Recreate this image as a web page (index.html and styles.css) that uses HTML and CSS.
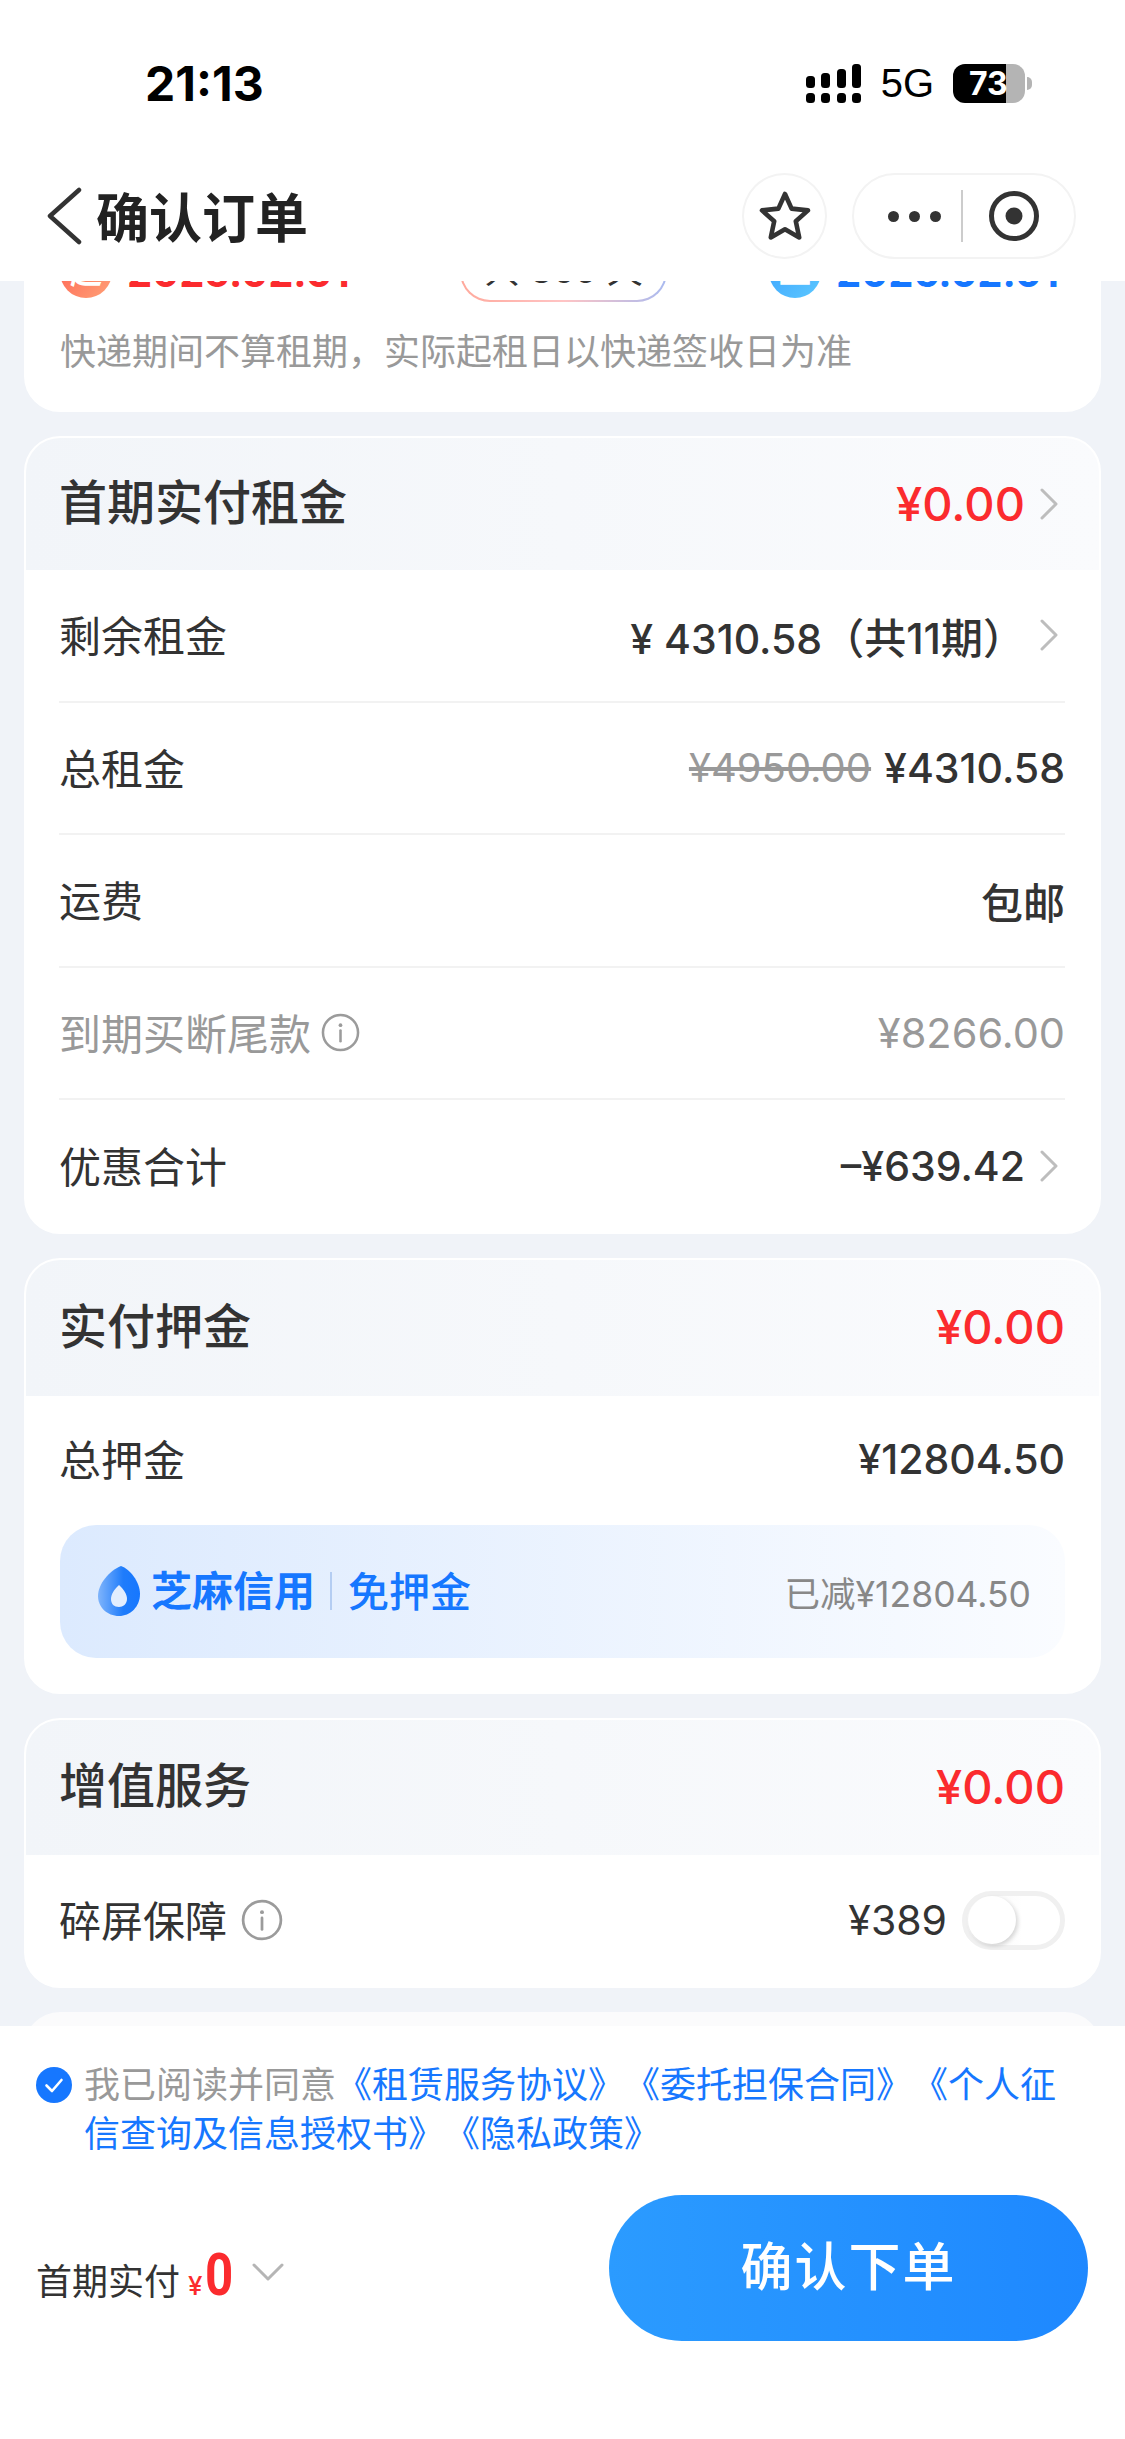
FILE: index.html
```html
<!DOCTYPE html>
<html lang="zh-CN">

<head>
  <meta charset="UTF-8">
  <title>确认订单</title>
  <link rel="stylesheet" href="styles.css">
</head>

<body>
  <!-- 共用图标 -->
  <svg class="defs" width="0" height="0">
    <symbol id="arrow" viewBox="0 0 18 32">
      <path d="M2 2 L16 16 L2 30" fill="none" stroke="#bdbdbd" stroke-width="3" stroke-linecap="round" stroke-linejoin="round" />
    </symbol>
    <symbol id="info" viewBox="0 0 40 40">
      <circle cx="20" cy="20" r="18" fill="none" stroke="#9b9b9b" stroke-width="2.6" />
      <circle cx="20" cy="12.5" r="1.9" fill="#9b9b9b" />
      <path d="M20 18 V29" stroke="#9b9b9b" stroke-width="2.6" stroke-linecap="round" />
    </symbol>
  </svg>

  <div class="app">
    <header class="top">
      <div class="status">
        <span class="time">21:13</span>
        <div class="status-right">
          <svg class="signal" width="56" height="39" viewBox="0 0 56 39">
            <rect x="0" y="29" width="9" height="10" rx="3.5" />
            <rect x="15" y="29" width="9" height="10" rx="3.5" />
            <rect x="31" y="29" width="9" height="10" rx="3.5" />
            <rect x="46" y="29" width="9" height="10" rx="3.5" />
            <rect x="0" y="12" width="9" height="12" rx="3.5" />
            <rect x="15" y="9" width="9" height="15" rx="3.5" />
            <rect x="31" y="5" width="9" height="19" rx="3.5" />
            <rect x="46" y="0" width="9" height="24" rx="3.5" />
          </svg>
          <span class="net">5G</span>
          <div class="battery">73</div>
        </div>
      </div>
      <nav class="nav">
        <div class="nav-left">
          <svg class="back" width="36" height="58" viewBox="0 0 36 58">
            <path d="M33 3 L4 29 L33 55" fill="none" stroke="#333" stroke-width="4.5" stroke-linecap="round" stroke-linejoin="round" />
          </svg>
          <h1 class="nav-title">确认订单</h1>
        </div>
        <div class="nav-right">
          <div class="star-btn">
            <svg width="54" height="50" viewBox="0 0 54 50">
              <path d="M27 3 L33.6 17.6 L50 19.4 L37.8 30.2 L41.2 46.4 L27 38.2 L12.8 46.4 L16.2 30.2 L4 19.4 L20.4 17.6 Z" fill="none" stroke="#333" stroke-width="4.6" stroke-linejoin="round" />
            </svg>
          </div>
          <div class="capsule">
            <div class="dots"><i></i><i></i><i></i></div>
            <div class="capsule-line"></div>
            <svg width="52" height="52" viewBox="0 0 52 52">
              <circle cx="26" cy="26" r="22.5" fill="none" stroke="#333" stroke-width="5" />
              <circle cx="26" cy="26" r="8.5" fill="#333" />
            </svg>
          </div>
        </div>
      </nav>
    </header>

    <main class="scroll">
      <section class="card card-date">
        <div class="date-row">
          <div class="date red"><span class="date-tag">起</span>2025.02.01</div>
          <div class="days">共 365 天</div>
          <div class="date blue"><span class="date-tag">止</span>2026.02.01</div>
        </div>
        <p class="date-note">快递期间不算租期，实际起租日以快递签收日为准</p>
      </section>

      <section class="card">
        <div class="card-head head-rent">
          <h2>首期实付租金</h2>
          <div class="val-wrap"><span class="price">¥0.00</span><svg class="arrow"><use href="#arrow" /></svg></div>
        </div>
        <div class="row">
          <span>剩余租金</span>
          <div class="val-wrap"><span class="val">¥ 4310.58<span class="val-cn">（共11期）</span></span><svg class="arrow"><use href="#arrow" /></svg></div>
        </div>
        <div class="row">
          <span>总租金</span>
          <div class="val-wrap"><s class="old">¥4950.00</s><span class="val">¥4310.58</span></div>
        </div>
        <div class="row">
          <span>运费</span>
          <span class="val val-cn">包邮</span>
        </div>
        <div class="row grey">
          <div class="label-info"><span>到期买断尾款</span><svg class="info"><use href="#info" /></svg></div>
          <span class="val-grey">¥8266.00</span>
        </div>
        <div class="row row-last no-line">
          <span>优惠合计</span>
          <div class="val-wrap"><span class="val">–¥639.42</span><svg class="arrow"><use href="#arrow" /></svg></div>
        </div>
      </section>

      <section class="card card-deposit">
        <div class="card-head head-deposit">
          <h2>实付押金</h2>
          <span class="price">¥0.00</span>
        </div>
        <div class="row row-deposit no-line">
          <span>总押金</span>
          <span class="val">¥12804.50</span>
        </div>
        <div class="zhima">
          <div class="zhima-left">
            <svg width="44" height="52" viewBox="0 0 44 52">
              <defs>
                <linearGradient id="drop" x1="0" y1="0" x2="1" y2="0">
                  <stop offset="0" stop-color="#7fb4fb" />
                  <stop offset="0.6" stop-color="#1f7cfb" />
                  <stop offset="1" stop-color="#1677ff" />
                </linearGradient>
              </defs>
              <path d="M24 1 C33 4 43 17 43 29 C43 42 33 51 22 51 C10 51 1 42 1 31 C1 19 12 6 24 1 Z" fill="url(#drop)" />
              <path d="M22 20 C27 25 30 29 30 34 C30 39 26 42 22 42 C17 42 14 39 14 34 C14 29 17 25 22 20 Z" fill="#e3eefe" />
            </svg>
            <span class="zhima-name">芝麻信用</span>
            <span class="zhima-line"></span>
            <span class="zhima-free">免押金</span>
          </div>
          <span class="zhima-off">已减¥12804.50</span>
        </div>
      </section>

      <section class="card">
        <div class="card-head head-service">
          <h2>增值服务</h2>
          <span class="price">¥0.00</span>
        </div>
        <div class="row row-service no-line">
          <div class="label-info"><span>碎屏保障</span><svg class="info info-big"><use href="#info" /></svg></div>
          <div class="val-wrap">
            <span class="val val-plain">¥389</span>
            <div class="switch"><div class="knob"></div></div>
          </div>
        </div>
      </section>

      <section class="card card-next"></section>
    </main>

    <footer class="foot">
      <div class="agree">
        <svg class="check" width="36" height="36" viewBox="0 0 36 36">
          <circle cx="18" cy="18" r="18" fill="#1677ff" />
          <path d="M10.5 18.5 L16 24 L25.5 13" fill="none" stroke="#fff" stroke-width="2.6" stroke-linecap="round" stroke-linejoin="round" />
        </svg>
        <p>我已阅读并同意<a>《租赁服务协议》</a><a>《委托担保合同》</a><a>《个人征信查询及信息授权书》</a><a>《隐私政策》</a></p>
      </div>
      <div class="pay">
        <div class="pay-left">
          <span class="pay-label">首期实付</span>
          <span class="pay-yen">¥</span>
          <span class="pay-num">0</span>
          <svg class="pay-arrow" width="32" height="18" viewBox="0 0 32 18">
            <path d="M2 2 L16 16 L30 2" fill="none" stroke="#b5b5b5" stroke-width="3" stroke-linecap="round" stroke-linejoin="round" />
          </svg>
        </div>
        <div class="pay-btn">确认下单</div>
      </div>
    </footer>
  </div>
</body>

</html>
```

FILE: styles.css
```css
* {
  padding: 0;
  margin: 0;
  box-sizing: border-box;
}

body {
  width: 1125px;
  height: 2439px;
  overflow: hidden;
  background-color: #f0f3f8;
  color: #333333;
  font-family: Inter, "Noto Sans CJK SC", sans-serif;
  font-size: 42px;
  text-spacing-trim: space-all;
}

.defs {
  position: absolute;
}

.app {
  display: flex;
  flex-direction: column;
  height: 2439px;
}

/* 顶栏 */
.top {
  height: 281px;
  background-color: #ffffff;
}

.status {
  height: 166px;
  display: flex;
  justify-content: space-between;
  align-items: center;
  padding: 0 100px 0 145px;
}

.time {
  font-size: 48px;
  font-weight: 700;
  color: #000000;
}

.status-right {
  display: flex;
  align-items: center;
}

.net {
  margin: 0 19px 0 19px;
  font-family: "Liberation Sans", sans-serif;
  font-size: 40px;
  color: #000000;
}

.battery {
  position: relative;
  width: 72px;
  height: 39px;
  padding-left: 16px;
  border-radius: 12px;
  background: linear-gradient(90deg, #000000 73.5%, #b4b4b4 73.5%);
  color: #ffffff;
  font-size: 32px;
  font-weight: 700;
  line-height: 39px;
}

.battery::after {
  content: "";
  position: absolute;
  right: -7px;
  top: 13px;
  width: 5px;
  height: 13px;
  border-radius: 0 6px 6px 0;
  background-color: #b4b4b4;
}

.nav {
  height: 115px;
  display: flex;
  justify-content: space-between;
  align-items: center;
  padding: 7px 49px 22px 46px;
}

.nav-left {
  display: flex;
  align-items: center;
  gap: 14px;
}

.nav-title {
  margin-bottom: 3px;
  font-size: 53px;
  font-weight: 700;
  color: #222222;
}

.nav-right {
  display: flex;
  align-items: center;
  gap: 25px;
}

.star-btn {
  width: 85px;
  height: 86px;
  display: flex;
  justify-content: center;
  align-items: center;
  border: 2px solid #f3f3f3;
  border-radius: 50%;
}

.capsule {
  width: 224px;
  height: 86px;
  display: flex;
  align-items: center;
  padding-left: 34px;
  border: 2px solid #f3f3f3;
  border-radius: 43px;
}

.dots {
  display: flex;
  gap: 10px;
}

.dots i {
  width: 11px;
  height: 11px;
  border-radius: 50%;
  background-color: #333333;
}

.capsule-line {
  width: 2px;
  height: 52px;
  margin: 0 25px 0 20px;
  background-color: #cccccc;
}

/* 内容 */
.scroll {
  flex: 1;
  min-height: 0;
  overflow: hidden;
  padding: 0 24px;
  display: flex;
  flex-direction: column;
  gap: 24px;
}

.card {
  flex: none;
  border: 2px solid #ffffff;
  border-radius: 36px;
  background-color: #ffffff;
  overflow: hidden;
}

.card-date {
  margin-top: -79px;
  padding: 38px 34px 33px;
}

.date-row {
  height: 60px;
  display: flex;
  justify-content: space-between;
  align-items: center;
  padding: 0 6px 0 0;
}

.date {
  display: flex;
  align-items: center;
  gap: 15px;
  font-size: 40px;
  font-weight: 700;
}

.date.red {
  color: #fb2b2e;
}

.date.blue {
  color: #1677ff;
}

.date-tag {
  width: 52px;
  height: 52px;
  border-radius: 50%;
  background: linear-gradient(135deg, #ff5a4f, #ffa277);
  color: #ffffff;
  font-size: 32px;
  line-height: 52px;
  text-align: center;
}

.date.blue .date-tag {
  background: linear-gradient(135deg, #3aa0ff, #5cc8ff);
}

.days {
  width: 207px;
  height: 60px;
  margin-left: 8px;
  border: 2px solid transparent;
  border-radius: 30px;
  background: linear-gradient(#ffffff, #ffffff) padding-box, linear-gradient(90deg, #ffa99c, #ffc4c4 50%, #a9baf0) border-box;
  font-size: 36px;
  line-height: 52px;
  text-align: center;
  color: #333333;
}

.date-note {
  margin-top: 25px;
  font-size: 36px;
  line-height: 50px;
  color: #999999;
}

.card-head {
  display: flex;
  justify-content: space-between;
  align-items: center;
  padding: 0 34px 0 33px;
  background: linear-gradient(90deg, #f2f5f9, #fafbfd);
}

.card-head h2 {
  margin-bottom: 10px;
  font-size: 48px;
  font-weight: 500;
  color: #333333;
}

.head-rent {
  height: 132px;
}

.head-deposit {
  height: 136px;
}

.head-service {
  height: 135px;
}

.price {
  margin-bottom: 2px;
  font-size: 47px;
  font-weight: 500;
  color: #fb2b2e;
}

.val-wrap {
  display: flex;
  align-items: center;
  gap: 15px;
}

.arrow {
  width: 18px;
  height: 32px;
  margin-right: 7px;
}

.row {
  height: 132.5px;
  margin: 0 34px 0 33px;
  display: flex;
  justify-content: space-between;
  align-items: center;
  border-bottom: 2px solid #f2f2f2;
}

.row > span:first-child,
.label-info span {
  margin-bottom: 3px;
}

.row.no-line {
  border-bottom: none;
}

.row.grey {
  color: #999999;
}

.row-last {
  height: 131.5px;
}

.row-deposit {
  height: 126px;
  margin-bottom: 3px;
}

.row-service {
  height: 131px;
}

.val {
  font-size: 41px;
  font-weight: 500;
  color: #333333;
}

.val-cn {
  font-size: 42px;
}

.val-plain {
  font-weight: 400;
}

.old {
  margin-right: -2px;
  font-size: 40px;
  font-weight: 400;
  color: #999999;
}

.val-grey {
  font-size: 41.5px;
  font-weight: 400;
  color: #999999;
}

.label-info {
  display: flex;
  align-items: center;
  gap: 10px;
}

.info {
  width: 39px;
  height: 39px;
}

.info-big {
  width: 42px;
  height: 42px;
  margin-left: 4px;
}

.switch {
  width: 103px;
  height: 59px;
  border: 5px solid #f0f0f0;
  border-radius: 30px;
  padding: 0 1px;
  display: flex;
  align-items: center;
  background: linear-gradient(90deg, #f5f5f5, #ffffff 60%);
}

.knob {
  width: 48px;
  height: 48px;
  border-radius: 50%;
  background-color: #ffffff;
  box-shadow: 2px 2px 4px rgba(0, 0, 0, 0.16);
}

.card-deposit {
  padding-bottom: 34px;
}

.zhima {
  height: 133px;
  margin: 0 34px;
  display: flex;
  justify-content: space-between;
  align-items: center;
  padding: 0 34px 0 37px;
  border-radius: 36px;
  background: linear-gradient(90deg, #dceafe, #fafcff);
}

.zhima-left {
  display: flex;
  align-items: center;
}

.zhima-name {
  margin-left: 10px;
  margin-bottom: 6px;
  font-size: 41px;
  font-weight: 700;
  color: #1677ff;
}

.zhima-line {
  width: 2px;
  height: 38px;
  margin: 0 16px 0 15px;
  background-color: #b4cdf2;
}

.zhima-free {
  margin-bottom: 4px;
  font-size: 41px;
  font-weight: 500;
  color: #1677ff;
}

.zhima-off {
  font-size: 35.5px;
  color: #888888;
}

.card-next {
  height: 100px;
  background-color: #fbfbfc;
  border-color: #fbfbfc;
}

/* 底部 */
.foot {
  height: 413px;
  background-color: #ffffff;
  padding: 35px 37px 0 36px;
}

.agree {
  display: flex;
  align-items: flex-start;
  gap: 12px;
  padding-right: 10px;
  font-size: 36px;
  line-height: 49px;
  color: #999999;
}

.check {
  flex: none;
  margin-top: 6px;
}

.agree a {
  color: #1677ff;
}

.pay {
  margin-top: 36px;
  display: flex;
  justify-content: space-between;
  align-items: center;
}

.pay-left {
  display: flex;
  align-items: baseline;
  margin-top: 12px;
}

.pay-label {
  font-size: 36px;
  color: #333333;
}

.pay-yen {
  margin-left: 8px;
  font-size: 26px;
  font-weight: 500;
  color: #fb2b2e;
}

.pay-num {
  display: inline-block;
  width: 30px;
  margin-left: 2px;
  font-family: Roboto, sans-serif;
  font-size: 60px;
  font-weight: 700;
  color: #fb2b2e;
  transform: scaleX(0.82);
  transform-origin: left center;
}

.pay-arrow {
  margin-left: 17px;
  align-self: center;
  margin-top: -4px;
}

.pay-btn {
  width: 479px;
  height: 146px;
  border-radius: 73px;
  background: linear-gradient(90deg, #2b9bff, #1e88ff);
  color: #ffffff;
  font-size: 52px;
  font-weight: 500;
  letter-spacing: 2px;
  line-height: 146px;
  text-align: center;
}
```
